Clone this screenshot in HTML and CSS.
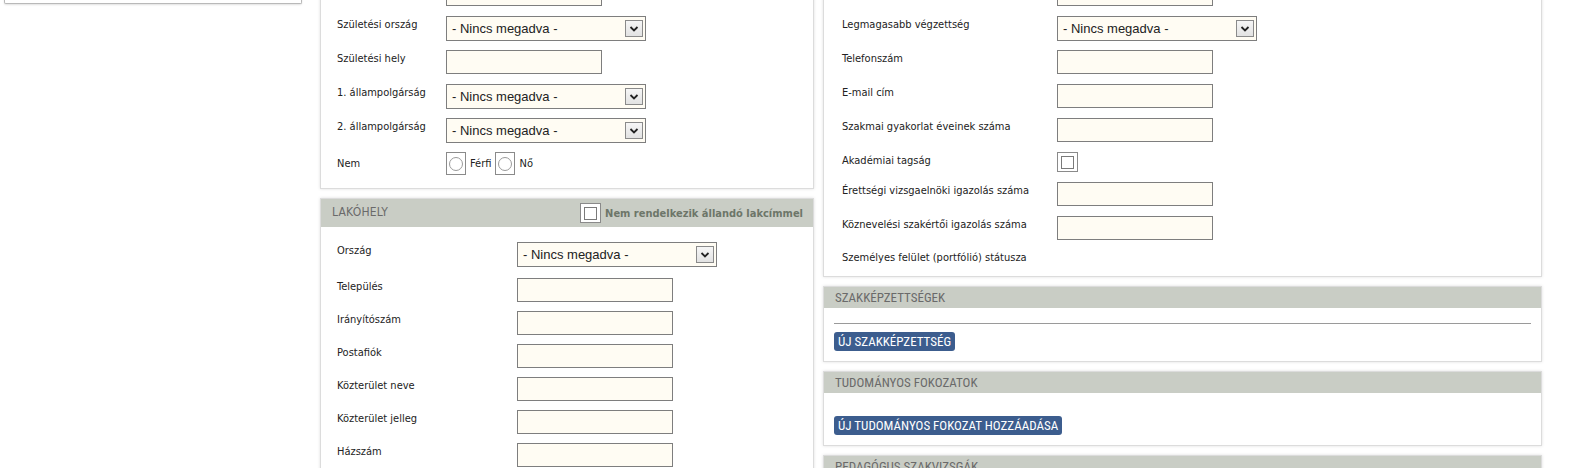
FILE: index.html
```html
<!DOCTYPE html>
<html lang="hu">
<head>
<meta charset="utf-8">
<title>Személyes adatok</title>
<link rel="stylesheet" href="styles.css">
</head>
<body>
<div class="page">
  <aside class="sidebar">
    <div class="side-box"></div>
  </aside>

  <main class="col col-mid">
    <section class="panel panel-top">
      <div class="form lw-mid">
        <div class="row"><span class="lbl"></span><input class="inp" type="text"></div>
        <div class="row"><span class="lbl">Születési ország</span><div class="sel"><span>- Nincs megadva -</span><i class="arr"><svg viewBox="0 0 10 10" width="10" height="10"><path d="M1.5 3 L5 6.5 L8.5 3" fill="none" stroke="#222" stroke-width="1.8"/></svg></i></div></div>
        <div class="row"><span class="lbl">Születési hely</span><input class="inp" type="text"></div>
        <div class="row"><span class="lbl">1. állampolgárság</span><div class="sel"><span>- Nincs megadva -</span><i class="arr"><svg viewBox="0 0 10 10" width="10" height="10"><path d="M1.5 3 L5 6.5 L8.5 3" fill="none" stroke="#222" stroke-width="1.8"/></svg></i></div></div>
        <div class="row"><span class="lbl">2. állampolgárság</span><div class="sel"><span>- Nincs megadva -</span><i class="arr"><svg viewBox="0 0 10 10" width="10" height="10"><path d="M1.5 3 L5 6.5 L8.5 3" fill="none" stroke="#222" stroke-width="1.8"/></svg></i></div></div>
        <div class="row row-radio"><span class="lbl lbl-radio">Nem</span>
          <div class="radios">
            <label class="radio"><span class="rbox"><span class="rdot"></span></span>Férfi</label>
            <label class="radio"><span class="rbox"><span class="rdot"></span></span>Nő</label>
          </div>
        </div>
      </div>
    </section>

    <section class="panel">
      <header class="panel-head head-tall">
        <h2 class="head-title">LAKÓHELY</h2>
        <label class="head-check"><span class="cbox"><span class="cinner"></span></span>Nem rendelkezik állandó lakcímmel</label>
      </header>
      <div class="form form-addr lw-addr">
        <div class="row row-sel"><span class="lbl">Ország</span><div class="sel"><span>- Nincs megadva -</span><i class="arr"><svg viewBox="0 0 10 10" width="10" height="10"><path d="M1.5 3 L5 6.5 L8.5 3" fill="none" stroke="#222" stroke-width="1.8"/></svg></i></div></div>
        <div class="row"><span class="lbl">Település</span><input class="inp" type="text"></div>
        <div class="row"><span class="lbl">Irányítószám</span><input class="inp" type="text"></div>
        <div class="row"><span class="lbl">Postafiók</span><input class="inp" type="text"></div>
        <div class="row"><span class="lbl">Közterület neve</span><input class="inp" type="text"></div>
        <div class="row"><span class="lbl">Közterület jelleg</span><input class="inp" type="text"></div>
        <div class="row"><span class="lbl">Házszám</span><input class="inp" type="text"></div>
      </div>
    </section>
  </main>

  <div class="col col-right">
    <section class="panel panel-top">
      <div class="form lw-right">
        <div class="row"><span class="lbl"></span><input class="inp" type="text"></div>
        <div class="row"><span class="lbl">Legmagasabb végzettség</span><div class="sel"><span>- Nincs megadva -</span><i class="arr"><svg viewBox="0 0 10 10" width="10" height="10"><path d="M1.5 3 L5 6.5 L8.5 3" fill="none" stroke="#222" stroke-width="1.8"/></svg></i></div></div>
        <div class="row"><span class="lbl">Telefonszám</span><input class="inp" type="text"></div>
        <div class="row"><span class="lbl">E-mail cím</span><input class="inp" type="text"></div>
        <div class="row"><span class="lbl">Szakmai gyakorlat éveinek száma</span><input class="inp" type="text"></div>
        <div class="row row-check"><span class="lbl">Akadémiai tagság</span><span class="cbox"><span class="cinner"></span></span></div>
        <div class="row"><span class="lbl">Érettségi vizsgaelnöki igazolás száma</span><input class="inp" type="text"></div>
        <div class="row"><span class="lbl">Köznevelési szakértői igazolás száma</span><input class="inp" type="text"></div>
        <div class="row row-text"><span class="lbl">Személyes felület (portfólió) státusza</span></div>
      </div>
    </section>

    <section class="panel">
      <header class="panel-head"><h2 class="head-narrow">SZAKKÉPZETTSÉGEK</h2></header>
      <div class="panel-body body-qual">
        <hr class="sep">
        <button class="btn" type="button">ÚJ SZAKKÉPZETTSÉG</button>
      </div>
    </section>

    <section class="panel">
      <header class="panel-head"><h2 class="head-narrow">TUDOMÁNYOS FOKOZATOK</h2></header>
      <div class="panel-body body-degree">
        <button class="btn" type="button">ÚJ TUDOMÁNYOS FOKOZAT HOZZÁADÁSA</button>
      </div>
    </section>

    <section class="panel">
      <header class="panel-head"><h2 class="head-narrow">PEDAGÓGUS SZAKVIZSGÁK</h2></header>
      <div class="panel-body body-degree"></div>
    </section>
  </div>
</div>
</body>
</html>
```

FILE: styles.css
```css
html, body {
  margin: 0;
  padding: 0;
  background: #ffffff;
  overflow: hidden;
}

body {
  font-family: "DejaVu Sans Condensed", "DejaVu Sans", sans-serif;
  font-size: 11px;
  color: #222222;
}

.page {
  display: flex;
  align-items: flex-start;
  margin-top: -30px;
  padding-left: 4px;
}

.sidebar {
  width: 298px;
  flex: none;
  margin-right: 18px;
}

.side-box {
  height: 34px;
  box-sizing: border-box;
  border: 1px solid #b9b9b9;
  border-top: none;
  border-radius: 0 0 2px 2px;
  box-shadow: 0 1px 2px rgba(0, 0, 0, 0.12);
  background: #ffffff;
}

.col {
  display: flex;
  flex-direction: column;
  flex: none;
}

.col-mid {
  width: 494px;
  gap: 9px;
  margin-right: 9px;
}

.col-right {
  width: 719px;
  gap: 9px;
}

.panel {
  background: #ffffff;
  border: 1px solid #dcdcdc;
  box-shadow: 0 0 3px rgba(0, 0, 0, 0.13);
}

.panel-top {
  padding: 11px 16px 2px 16px;
}

.col-right .panel-top {
  padding: 11px 17px 10px 18px;
}

.form {
  display: flex;
  flex-direction: column;
}

.row {
  display: flex;
  align-items: flex-start;
  height: 34px;
}

.lbl {
  flex: none;
  line-height: 15px;
  padding-top: 1px;
  white-space: nowrap;
}

.lw-mid .lbl { width: 109px; }
.lw-addr .lbl { width: 180px; }
.lw-right .lbl { width: 215px; }

.lbl-radio { padding-top: 4px; }

.form-addr {
  padding: 15px 16px 0 16px;
}

.form-addr .row { height: 33px; }
.form-addr .row-sel { height: 36px; }

.row-check { height: 30px; }
.row-text { height: 16px; }
.row-text .lbl { padding-top: 0; }

.inp {
  box-sizing: border-box;
  width: 156px;
  height: 24px;
  margin: 0;
  padding: 0 4px;
  border: 1px solid #7e7e7e;
  background: #fffcf3;
  font: inherit;
}

.sel {
  box-sizing: border-box;
  width: 200px;
  height: 25px;
  border: 1px solid #7e7e7e;
  background: #fffcf3;
  display: flex;
  align-items: center;
  justify-content: space-between;
  padding: 0 2px 0 5px;
  font-family: "Liberation Sans", Arial, sans-serif;
  font-size: 13px;
  color: #222222;
}

.arr {
  box-sizing: border-box;
  width: 18px;
  height: 17px;
  border: 1px solid #8a8a8a;
  background: linear-gradient(#f6f6f6, #e2e2e2);
  display: flex;
  align-items: center;
  justify-content: center;
}

.radios {
  display: flex;
  align-items: center;
  gap: 4px;
}

.radio {
  display: flex;
  align-items: center;
  gap: 4px;
}

.rbox {
  box-sizing: border-box;
  width: 20px;
  height: 23px;
  border: 1px solid #8a8a8a;
  background: #ffffff;
  display: flex;
  align-items: center;
  justify-content: center;
}

.rdot {
  box-sizing: border-box;
  width: 14px;
  height: 14px;
  border: 1px solid #9a9a9a;
  border-radius: 50%;
  background: #ffffff;
}

.cbox {
  box-sizing: border-box;
  width: 21px;
  height: 20px;
  border: 1px solid #8a8a8a;
  background: #ffffff;
  display: flex;
  align-items: center;
  justify-content: center;
  flex: none;
}

.cinner {
  box-sizing: border-box;
  width: 13px;
  height: 13px;
  border: 1px solid #7a7a7a;
  background: #ffffff;
}

.panel-head {
  background: #c9cdc5;
  display: flex;
  align-items: center;
  justify-content: space-between;
  height: 21px;
  padding: 0 11px;
}

.head-tall {
  height: 28px;
  padding-right: 10px;
}

.panel-head h2 {
  margin: 0;
  font-weight: normal;
  color: #6a6a6a;
}

.head-title {
  font-size: 12px;
  line-height: 14px;
  margin-top: -3px !important;
  letter-spacing: 0.2px;
}

.head-narrow {
  font-family: "Roboto Condensed", "Liberation Sans Narrow", "DejaVu Sans Condensed", sans-serif;
  font-size: 13px;
  line-height: 16px;
}

.head-check {
  display: flex;
  align-items: center;
  gap: 4px;
  font-size: 11px;
  font-weight: bold;
  color: #6d7669;
  white-space: nowrap;
}

.panel-body {
  padding: 0 10px 10px 10px;
}

.body-qual {
  padding-top: 15px;
}

.body-degree {
  padding-top: 23px;
}

.sep {
  margin: 0 0 8px 0;
  border: none;
  border-top: 1px solid #9a9a9a;
  height: 0;
}

.btn {
  display: block;
  height: 19px;
  margin: 0;
  padding: 0 4px;
  border: none;
  border-radius: 3px;
  background: #3c5d8e;
  color: #ffffff;
  font-family: "Roboto Condensed", "Liberation Sans Narrow", "DejaVu Sans Condensed", sans-serif;
  font-size: 13px;
  line-height: 19px;
  cursor: pointer;
}
```
